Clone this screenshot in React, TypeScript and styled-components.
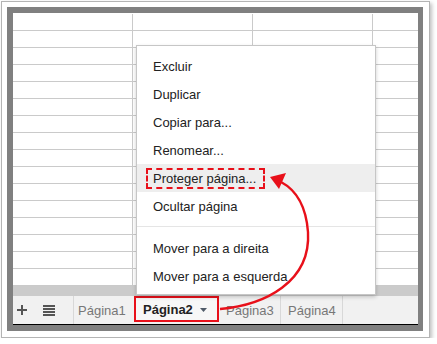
import styled, { createGlobalStyle } from "styled-components";

const GlobalStyle = createGlobalStyle`
    body {
        margin: 0;
        background: #fff;
        font-family: "Liberation Sans", Arial, sans-serif;
    }
`;

const menuItems = ["Excluir", "Duplicar", "Copiar para...", "Renomear...", "Proteger página...", "Ocultar página"];
const moveItems = ["Mover para a direita", "Mover para a esquerda"];
const otherTabs = ["Página3", "Página4"];

function App(){
    const cells = Array.from({ length: 16 * 4 }, (_, i) => i);

    return(
        <>
            <GlobalStyle/>
            <Outer>
                <Frame>
                    <Window>
                        <Grid>
                            {cells.map((i)=>(
                                <Cell key={i} $last={i % 4 === 3}/>
                            ))}
                        </Grid>
                        <ScrollBar/>
                        <TabBar>
                            <Tools>
                                <svg width="10" height="10" viewBox="0 0 10 10">
                                    <rect x="4" y="0" width="2" height="10" fill="#555"/>
                                    <rect x="0" y="4" width="10" height="2" fill="#555"/>
                                </svg>
                                <svg width="12" height="11" viewBox="0 0 12 11">
                                    <rect x="0" y="0" width="12" height="2" fill="#555"/>
                                    <rect x="0" y="3" width="12" height="2" fill="#555"/>
                                    <rect x="0" y="6" width="12" height="2" fill="#555"/>
                                    <rect x="0" y="9" width="12" height="2" fill="#555"/>
                                </svg>
                            </Tools>
                            <Tab $first>Página1</Tab>
                            <ActiveTab>
                                Página2
                                <svg width="7" height="4" viewBox="0 0 7 4">
                                    <polygon points="0,0 7,0 3.5,4" fill="#4f5a68"/>
                                </svg>
                            </ActiveTab>
                            {otherTabs.map((name)=>(
                                <Tab key={name}>{name}</Tab>
                            ))}
                        </TabBar>

                        <Menu>
                            {menuItems.map((label)=>(
                                <MenuItem key={label} $active={label === "Proteger página..."}>
                                    {label === "Proteger página..." ? <Marked>{label}</Marked> : label}
                                </MenuItem>
                            ))}
                            <MenuSeparator/>
                            {moveItems.map((label)=>(
                                <MenuItem key={label}>{label}</MenuItem>
                            ))}
                        </Menu>

                        <Annotation viewBox="13 13 405 312" width="405" height="312">
                            <path d="M220,309 C265,305 311,282 308,232 C306,205 296,190 281,182" fill="none" stroke="#e8101a" strokeWidth="2.4"/>
                            <polygon points="270,177 286,173 279,189" fill="#e8101a"/>
                        </Annotation>
                    </Window>
                </Frame>
            </Outer>
        </>
    );
}

export default App;

const Outer = styled.div`
    box-sizing: border-box;
    width: 429px;
    height: 337px;
    margin: 1px 0 0 1px;
    padding: 5px 6px 6px 5px;
    background: #fff;
    border: 1px solid #b4b4b4;
    box-shadow: 2px 2px 4px rgba(0,0,0,0.25);
`;

const Frame = styled.div`
    background: #808080;
    padding: 6px 5px 6px 6px;
`;

const Window = styled.div`
    position: relative;
    width: 405px;
    height: 312px;
    background: #fff;
    display: flex;
    flex-direction: column;
    overflow: hidden;
`;

const Grid = styled.div`
    display: grid;
    grid-template-columns: 120px 120px 120px 1fr;
    grid-auto-rows: 17px;
    padding-top: 1px;
    height: 273px;
    box-sizing: border-box;
`;

const Cell = styled.div<{ $last?: boolean }>`
    box-sizing: border-box;
    border-bottom: 1px solid #cacaca;
    border-right: ${(p)=> p.$last ? "none" : "1px solid #cacaca"};
`;

const ScrollBar = styled.div`
    height: 10px;
    background: #cbcbcb;
`;

const TabBar = styled.div`
    height: 28px;
    background: #f1f1f1;
    border-bottom: 1px solid #000;
    display: flex;
    align-items: stretch;
    font-size: 13px;
`;

const Tools = styled.div`
    width: 61px;
    display: flex;
    align-items: center;
    gap: 16px;
    padding-left: 4px;
    box-sizing: border-box;
    border-right: 1px solid #d8d8d8;
    & svg { display: block; }
`;

const Tab = styled.div<{ $first?: boolean }>`
    box-sizing: border-box;
    width: ${(p)=> p.$first ? "60px" : "62px"};
    display: flex;
    align-items: center;
    padding-left: ${(p)=> p.$first ? "4px" : "7px"};
    color: #777;
    border-right: ${(p)=> p.$first ? "none" : "1px solid #d8d8d8"};
`;

const ActiveTab = styled.div`
    box-sizing: border-box;
    width: 85px;
    height: 26px;
    display: flex;
    align-items: center;
    gap: 7px;
    padding-left: 7px;
    border: 2px solid #e8101a;
    background: #f7f7f7;
    color: #222;
    font-weight: bold;
    & svg { display: block; margin-top: 1px; }
`;

const Menu = styled.div`
    position: absolute;
    left: 123px;
    top: 32px;
    width: 240px;
    box-sizing: border-box;
    padding: 6px 0 4px;
    background: #fff;
    border: 1px solid #c6c6c6;
    box-shadow: 0 2px 4px rgba(0,0,0,0.2);
    z-index: 2;
`;

const MenuItem = styled.div<{ $active?: boolean }>`
    height: 28px;
    display: flex;
    align-items: center;
    padding-left: 16px;
    font-size: 13px;
    color: #222;
    background: ${(p)=> p.$active ? "#eeeeee" : "transparent"};
`;

const Marked = styled.span`
    box-sizing: border-box;
    height: 21px;
    display: inline-flex;
    align-items: center;
    margin-left: -7px;
    padding: 0 7px 0 5px;
    border: 2px dashed #e8101a;
`;

const MenuSeparator = styled.div`
    height: 1px;
    background: #e5e5e5;
    margin: 6px 0 7px;
`;

const Annotation = styled.svg`
    position: absolute;
    left: 0;
    top: 0;
    z-index: 3;
    pointer-events: none;
`;
